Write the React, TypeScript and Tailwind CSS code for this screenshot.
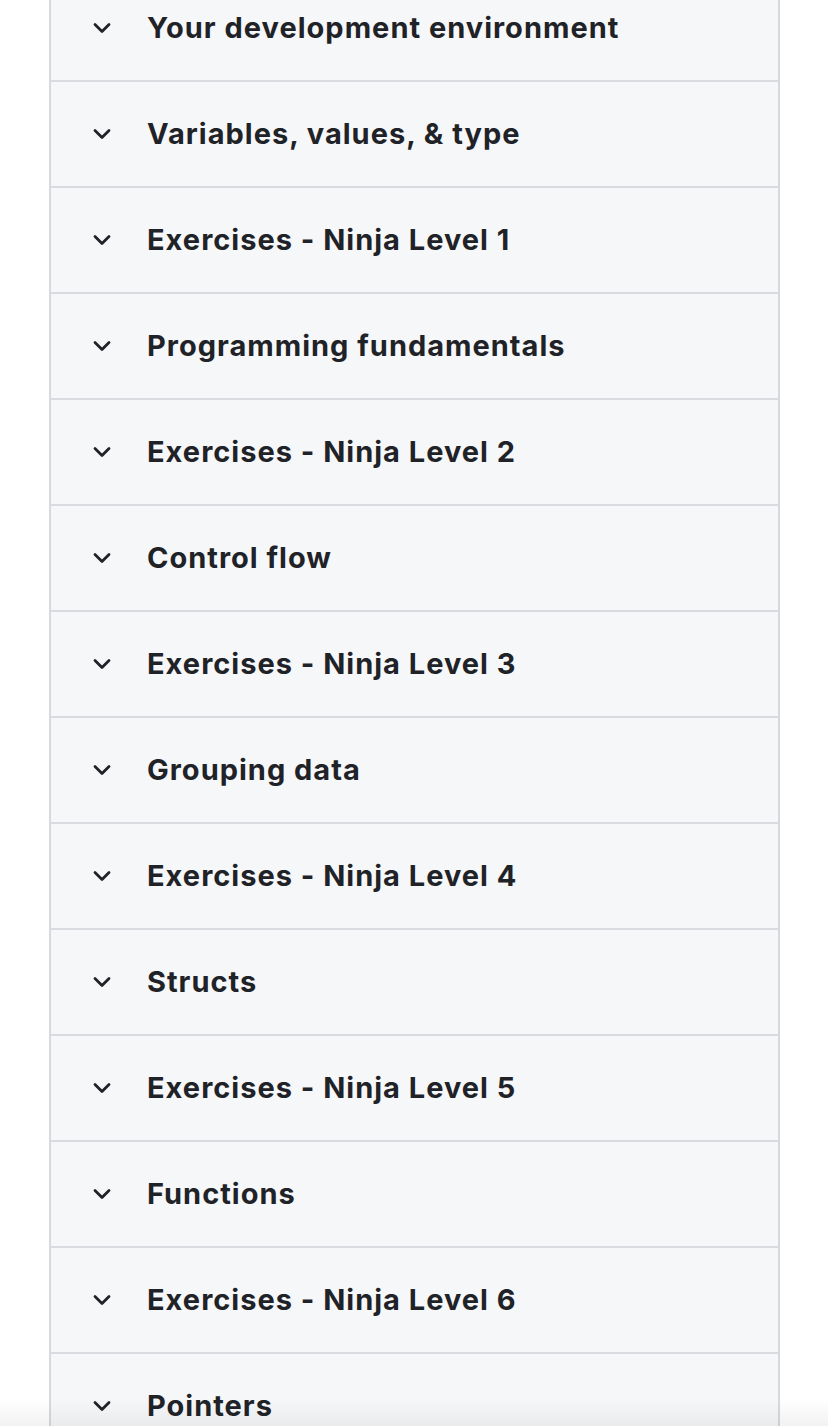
const sections = [
  "Your development environment",
  "Variables, values, & type",
  "Exercises - Ninja Level 1",
  "Programming fundamentals",
  "Exercises - Ninja Level 2",
  "Control flow",
  "Exercises - Ninja Level 3",
  "Grouping data",
  "Exercises - Ninja Level 4",
  "Structs",
  "Exercises - Ninja Level 5",
  "Functions",
  "Exercises - Ninja Level 6",
  "Pointers",
];

function Chevron() {
  return (
    <svg width="20" height="12" viewBox="0 0 20 12" fill="none" className="ml-[41px] shrink-0 text-[#1f2328]">
      <path d="M3 2.5 L10 9.5 L17 2.5" stroke="currentColor" strokeWidth="2.8" strokeLinecap="round" strokeLinejoin="round" />
    </svg>
  );
}

export default function App() {
  return (
    <div className="relative h-[1426px] overflow-hidden bg-white font-['Inter',sans-serif]">
      <div className="ml-[49px] -mt-[24px] w-[731px] border-x-2 border-[#d6dadf]">
        {sections.map((title) => (
          <div
            key={title}
            className="flex h-[106px] items-center border-b-2 border-[#d8dce0] bg-[#f6f7f9]"
          >
            <Chevron />
            <span className="ml-[35px] text-[29px] font-bold tracking-[1px] text-[#1f2328]">
              {title}
            </span>
          </div>
        ))}
      </div>

      {/* bottom fade */}
      <div className="pointer-events-none absolute inset-x-0 bottom-0 h-[28px] bg-gradient-to-b from-transparent to-black/[0.05]" />
    </div>
  );
}
